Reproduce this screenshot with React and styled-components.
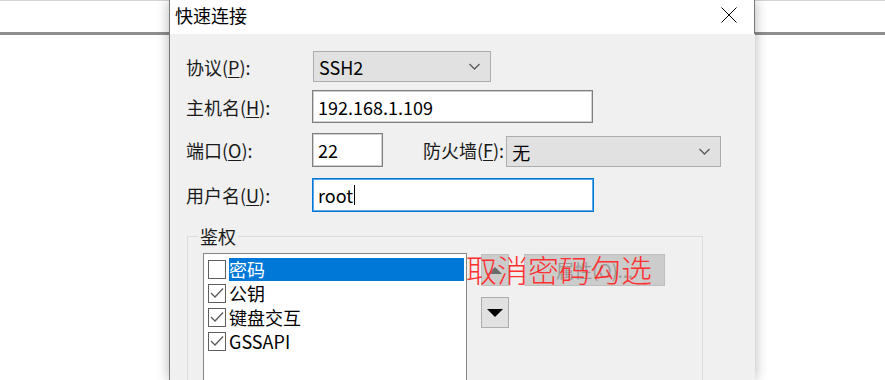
import React from "react";
import styled, { createGlobalStyle } from "styled-components";

const GlobalStyle = createGlobalStyle`
  html, body { margin: 0; padding: 0; background: #fff; }
  body {
    font-family: "Noto Sans CJK SC", "Noto Sans", sans-serif;
    overflow: hidden;
  }
  * { box-sizing: border-box; }
`;

const Page = styled.div`
  display: flex;
  width: 885px;
  height: 380px;
  overflow: hidden;
  background: #fff;
`;

const SidePane = styled.div`
  flex: ${(p) => (p.$grow ? "1 1 auto" : "0 0 169px")};
  border-top: 1px solid #d4d4d4;
`;

const SideStrip = styled.div`
  height: 34px;
  background: #fff;
  border-bottom: 3px solid #8e8e8e;
`;

const Dialog = styled.div`
  flex: 0 0 586px;
  position: relative;
  z-index: 1;
  display: flex;
  flex-direction: column;
  border-left: 1px solid #7a7a7a;
  box-shadow: 0 0 12px rgba(0, 0, 0, 0.3);
`;

const TitleBar = styled.div`
  height: 34px;
  flex: 0 0 34px;
  background: #fff;
  display: flex;
  align-items: center;
  justify-content: space-between;
  padding: 0 17px 4px 5px;
  border-right: 1px solid #7a7a7a;
`;

const Title = styled.span`
  font-size: 18px;
  color: #000;
  line-height: 24px;
`;

const Body = styled.div`
  flex: 1;
  background: #f0f0f0;
  padding: 17px 0 0 16px;
`;

const FormRow = styled.div`
  display: flex;
  align-items: center;
  height: ${(p) => p.$h}px;
  margin-bottom: ${(p) => p.$mb || 0}px;
`;

const Label = styled.span`
  flex: 0 0 ${(p) => (p.$w ? `${p.$w}px` : "auto")};
  margin-left: ${(p) => p.$ml || 0}px;
  font-size: 18px;
  color: #1a1a1a;
  line-height: 24px;
  white-space: nowrap;
  u { text-decoration: underline; text-underline-offset: 2px; }
`;

const Select = styled.div`
  width: ${(p) => p.$w}px;
  height: 31px;
  margin-left: ${(p) => p.$ml || 0}px;
  align-self: ${(p) => (p.$top ? "flex-start" : "center")};
  margin-top: ${(p) => p.$top || 0}px;
  background: #e1e1e1;
  border: 1px solid #adadad;
  display: flex;
  align-items: center;
  justify-content: space-between;
  padding: 0 10px 0 5px;
  font-size: 18px;
  color: #000;
  line-height: 24px;
`;

const TextField = styled.div`
  width: ${(p) => p.$w}px;
  height: ${(p) => p.$h}px;
  background: #fff;
  border: 1px solid ${(p) => (p.$focus ? "#0078d7" : "#7f7f7f")};
  box-shadow: inset 0 0 0 1px ${(p) => (p.$focus ? "#5aa5e6" : "#d0d0d0")};
  display: flex;
  align-items: center;
  padding-left: 5px;
  font-size: 18px;
  line-height: 24px;
  color: #000;
`;

const Caret = styled.span`
  display: inline-block;
  width: 1px;
  height: 20px;
  background: #000;
  margin-left: 1px;
`;

const Group = styled.fieldset`
  margin: 12px 0 0 1px;
  padding: 0;
  width: 516px;
  min-width: 0;
  border: 1px solid #dcdcdc;
  border-bottom: none;
`;

const Legend = styled.legend`
  margin-left: 10px;
  padding: 0 2px;
  font-size: 18px;
  line-height: 24px;
  color: #1a1a1a;
`;

const GroupInner = styled.div`
  position: relative;
  display: flex;
  align-items: flex-start;
  padding: 5px 0 0 15px;
  height: 140px;
`;

const ListBox = styled.div`
  width: 264px;
  height: 150px;
  flex: 0 0 264px;
  background: #fff;
  border: 1px solid #858585;
  padding: 3px 2px 0 4px;
`;

const Item = styled.div`
  height: 24px;
  display: flex;
  align-items: center;
`;

const CheckBox = styled.span`
  flex: 0 0 18px;
  width: 18px;
  height: 19px;
  margin-right: 3px;
  background: #fff;
  border: 1px solid #5f5f5f;
  display: flex;
  align-items: center;
  justify-content: center;
`;

const ItemText = styled.span`
  flex: 1;
  height: 23px;
  display: flex;
  align-items: center;
  font-size: 18px;
  line-height: 23px;
  color: ${(p) => (p.$selected ? "#fff" : "#000")};
  background: ${(p) => (p.$selected ? "#0078d7" : "transparent")};
`;

const ArrowColumn = styled.div`
  display: flex;
  flex-direction: column;
  gap: 11px;
  margin: 1px 0 0 14px;
`;

const ArrowButton = styled.div`
  width: 28px;
  height: ${(p) => p.$h}px;
  background: ${(p) => (p.$disabled ? "#cccccc" : "#e1e1e1")};
  border: 1px solid ${(p) => (p.$disabled ? "#bfbfbf" : "#adadad")};
  display: flex;
  align-items: center;
  justify-content: center;
`;

const PropsButton = styled.div`
  width: 141px;
  height: 32px;
  margin: 1px 0 0 15px;
  background: #cccccc;
  border: 1px solid #bfbfbf;
  display: flex;
  align-items: center;
  justify-content: center;
  font-size: 18px;
  color: #9a9a9a;
  line-height: 24px;
`;

const Annotation = styled.div`
  position: absolute;
  left: 278px;
  top: 5px;
  font-size: 31px;
  line-height: 31px;
  font-weight: 300;
  color: #ff3030;
  white-space: nowrap;
  pointer-events: none;
`;

const Chevron = () => (
  <svg width="11" height="7" viewBox="0 0 11 7">
    <polyline points="0.5,1 5.5,6 10.5,1" fill="none" stroke="#5a5a5a" strokeWidth="1.3" />
  </svg>
);

const CloseIcon = () => (
  <svg width="16" height="16" viewBox="0 0 16 16">
    <line x1="0.5" y1="0.5" x2="15.5" y2="15.5" stroke="#000" strokeWidth="1" />
    <line x1="15.5" y1="0.5" x2="0.5" y2="15.5" stroke="#000" strokeWidth="1" />
  </svg>
);

const Check = () => (
  <svg width="14" height="12" viewBox="0 0 14 12">
    <polyline points="1,6 5,10 13,1.5" fill="none" stroke="#5a5a5a" strokeWidth="1.3" />
  </svg>
);

const Triangle = ({ up, color, w, h }) => (
  <svg width={w} height={h} viewBox={`0 0 ${w} ${h}`}>
    <polygon
      points={up ? `0,${h} ${w / 2},0 ${w},${h}` : `0,0 ${w},0 ${w / 2},${h}`}
      fill={color}
    />
  </svg>
);

const items = [
  { label: "密码", checked: false, selected: true },
  { label: "公钥", checked: true },
  { label: "键盘交互", checked: true },
  { label: "GSSAPI", checked: true },
];

export default function App() {
  return (
    <>
      <GlobalStyle />
      <Page>
        <SidePane>
          <SideStrip />
        </SidePane>
        <Dialog>
          <TitleBar>
            <Title>快速连接</Title>
            <CloseIcon />
          </TitleBar>
          <Body>
            <FormRow $h={31} $mb={8}>
              <Label $w={126}>
                协议(<u>P</u>):
              </Label>
              <Select $w={178} $ml={1}>
                <span>SSH2</span>
                <Chevron />
              </Select>
            </FormRow>
            <FormRow $h={33} $mb={10}>
              <Label $w={126}>
                主机名(<u>H</u>):
              </Label>
              <TextField $w={281} $h={33}>
                192.168.1.109
              </TextField>
            </FormRow>
            <FormRow $h={34} $mb={11}>
              <Label $w={126}>
                端口(<u>O</u>):
              </Label>
              <TextField $w={71} $h={34}>
                22
              </TextField>
              <Label $ml={40}>
                防火墙(<u>F</u>):
              </Label>
              <Select $w={215} $ml={2} $top={3}>
                <span>无</span>
                <Chevron />
              </Select>
            </FormRow>
            <FormRow $h={34}>
              <Label $w={126}>
                用户名(<u>U</u>):
              </Label>
              <TextField $w={282} $h={34} $focus>
                root
                <Caret />
              </TextField>
            </FormRow>
            <Group>
              <Legend>鉴权</Legend>
              <GroupInner>
                <ListBox>
                  {items.map((it) => (
                    <Item key={it.label}>
                      <CheckBox>{it.checked && <Check />}</CheckBox>
                      <ItemText $selected={it.selected}>{it.label}</ItemText>
                    </Item>
                  ))}
                </ListBox>
                <ArrowColumn>
                  <ArrowButton $h={32} $disabled>
                    <Triangle up color="#6a6a6a" w={14} h={7} />
                  </ArrowButton>
                  <ArrowButton $h={31}>
                    <Triangle color="#000" w={16} h={8} />
                  </ArrowButton>
                </ArrowColumn>
                <PropsButton>属性(O)...</PropsButton>
                <Annotation>取消密码勾选</Annotation>
              </GroupInner>
            </Group>
          </Body>
        </Dialog>
        <SidePane $grow>
          <SideStrip />
        </SidePane>
      </Page>
    </>
  );
}
